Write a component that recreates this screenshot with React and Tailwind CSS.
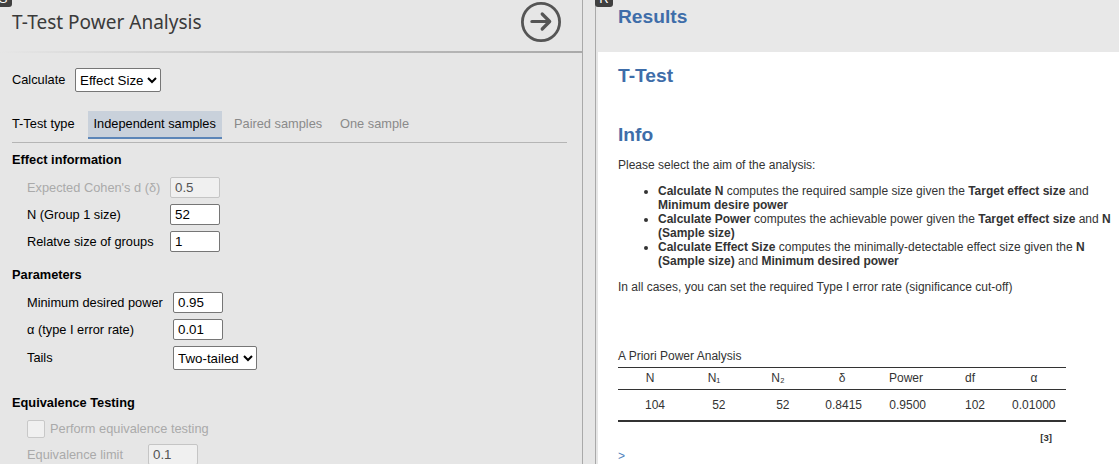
import React from "react";

const columns = [
  { label: "N", value: "104", pad: "pr-[17px]" },
  { label: "N₁", value: "52", pad: "pr-[20.5px]" },
  { label: "N₂", value: "52", pad: "pr-[20.5px]" },
  { label: "δ", value: "0.8415", pad: "pr-3" },
  { label: "Power", value: "0.9500", pad: "pr-3" },
  { label: "df", value: "102", pad: "pr-[17px]" },
  { label: "α", value: "0.01000", pad: "pr-[10.5px]" },
];

function Select({ value, className }) {
  return (
    <select
      className={`h-6 rounded-[2px] border border-[#767676] bg-white text-[13.333px] text-black ${className}`}
      defaultValue={value}
    >
      <option>{value}</option>
    </select>
  );
}

function NumberField({ label, value, labelWidth, disabled }) {
  return (
    <div className="flex h-[27px] items-center">
      <label className={`${labelWidth} whitespace-nowrap ${disabled ? "text-[#aaaaaa]" : ""}`}>{label}</label>
      <input
        disabled={disabled}
        defaultValue={value}
        className={`h-[21px] w-[50px] rounded-[2px] border px-1 text-[13.333px] ${
          disabled ? "border-[#c5c5c5] bg-[#f0f0f0] text-[#545454]" : "border-[#767676] bg-white text-black"
        }`}
      />
    </div>
  );
}

function KeyBadge({ children, className }) {
  return (
    <span
      className={`absolute -top-[11px] h-[18px] w-[18px] rounded-[3px] bg-[#404040] text-center text-[13px] leading-[19px] text-white ${className}`}
    >
      {children}
    </span>
  );
}

function Options() {
  return (
    <section className="relative flex h-full w-[583px] shrink-0 flex-col overflow-hidden border-r border-[#a9a9a9] text-[12.8px] leading-[15px] text-black">
      <KeyBadge className="-left-[6px]">S</KeyBadge>
      <header className="flex h-[51px] shrink-0 items-start justify-between pl-3 pr-[21px]">
        <h1 className="pt-[9px] font-['Noto_Sans',sans-serif] text-[19.05px] leading-[27px] text-[#3a3a3a]">
          T-Test Power Analysis
        </h1>
        <svg className="mt-[2px] h-10 w-10" viewBox="0 0 40 40" fill="none" stroke="#555555">
          <circle cx="20" cy="20" r="18.6" strokeWidth="2.8" />
          <path d="M10.9 19.5H28.5M21.2 12L28.7 19.5L21.2 27" strokeWidth="3.2" strokeLinecap="round" strokeLinejoin="round" />
        </svg>
      </header>
      <div className="h-[2px] shrink-0 bg-linear-to-r from-[#e6e6e6] via-[#c2c2c2] to-[#a9a9a9]" />
      <div className="flex h-[54px] shrink-0 items-center pl-3">
        <span className="w-[63px] pb-px">Calculate</span>
        <Select value="Effect Size" className="w-[86px]" />
      </div>
      <div className="ml-3 mr-[15px] flex h-9 shrink-0 items-start border-b border-[#b5b5b5] pt-1">
        <span className="w-[76px] pt-[5px]">T-Test type</span>
        <span className="h-7 w-[134px] whitespace-nowrap border-b-2 border-[#5b85b8] bg-[#c9d1db] pl-[5.5px] pt-[5px]">
          Independent samples
        </span>
        <span className="w-[118px] pl-3 pt-[5px] text-[#8a8a8a]">Paired samples</span>
        <span className="pt-[5px] text-[#8a8a8a]">One sample</span>
      </div>
      <h2 className="ml-3 mt-[9px] font-bold">Effect information</h2>
      <div className="ml-[27px] mt-[7px]">
        <NumberField label="Expected Cohen's d (δ)" value="0.5" labelWidth="w-[143px]" disabled />
        <NumberField label="N (Group 1 size)" value="52" labelWidth="w-[143px]" />
        <NumberField label="Relatve size of groups" value="1" labelWidth="w-[143px]" />
      </div>
      <h2 className="ml-3 mt-3 font-bold">Parameters</h2>
      <div className="ml-[27px] mt-[7px]">
        <NumberField label="Minimum desired power" value="0.95" labelWidth="w-[146px]" />
        <NumberField label="α (type I error rate)" value="0.01" labelWidth="w-[146px]" />
        <div className="flex h-[30px] items-center">
          <span className="w-[146px] pb-px">Tails</span>
          <Select value="Two-tailed" className="w-[84px]" />
        </div>
      </div>
      <h2 className="ml-3 mt-[22px] font-bold">Equivalence Testing</h2>
      <div className="ml-[27px] mt-[10px] flex h-[18px] shrink-0 items-center text-[#aaaaaa]">
        <span className="mr-[5px] h-[18px] w-[18px] rounded-[2px] border border-[#c8c8c8] bg-[#f0f0f0]" />
        <span className="pb-px">Perform equivalence testing</span>
      </div>
      <div className="ml-[27px] mt-[3px]">
        <NumberField label="Equivalence limit" value="0.1" labelWidth="w-[121px]" disabled />
      </div>
    </section>
  );
}

function Results() {
  return (
    <section className="relative h-full min-w-0 flex-1 border-l border-[#a9a9a9] pl-[2px] text-xs leading-[14px] text-[#333333]">
      <KeyBadge className="-left-px">R</KeyBadge>
      <div className="flex h-full flex-col overflow-hidden bg-white">
        <header className="h-[52px] shrink-0 bg-[#e8e8e8] pl-5 pt-[6px]">
          <h1 className="text-[19.2px] font-bold leading-[22px] text-[#3e6da9]">Results</h1>
        </header>
        <div className="pl-5">
          <h2 className="mt-[13px] text-[19.2px] font-bold leading-[22px] text-[#3e6da9]">T-Test</h2>
          <h2 className="mt-[37px] text-[19.2px] font-bold leading-[22px] text-[#3e6da9]">Info</h2>
          <p className="mt-3">Please select the aim of the analysis:</p>
          <ul className="mt-3 list-disc pl-10">
            <li>
              <b>Calculate N</b> computes the required sample size given the <b>Target effect size</b> and
              <br />
              <b>Minimum desire power</b>
            </li>
            <li>
              <b>Calculate Power</b> computes the achievable power given the <b>Target effect size</b> and <b>N</b>
              <br />
              <b>(Sample size)</b>
            </li>
            <li>
              <b>Calculate Effect Size</b> computes the minimally-detectable effect size given the <b>N</b>
              <br />
              <b>(Sample size)</b> and <b>Minimum desired power</b>
            </li>
          </ul>
          <p className="mt-3">In all cases, you can set the required Type I error rate (significance cut-off)</p>
          <div className="mt-[55px] w-[448px]">
            <p>A Priori Power Analysis</p>
            <div className="mt-1 grid h-[23px] grid-cols-7 border-y border-[#333333] pt-[3px] text-center">
              {columns.map((c) => (
                <span key={c.label} className="h-[14px]">
                  {c.label}
                </span>
              ))}
            </div>
            <div className="grid h-8 grid-cols-7 border-b-2 border-[#333333] pt-2 text-right">
              {columns.map((c) => (
                <span key={c.label} className={c.pad}>
                  {c.value}
                </span>
              ))}
            </div>
            <p className="mt-[9px] pr-[14px] text-right text-[9.6px] font-bold">[3]</p>
          </div>
          <p className="mt-1 text-[#4f81bd]">&gt;</p>
        </div>
      </div>
    </section>
  );
}

export default function App() {
  return (
    <main className="flex h-[464px] w-[1119px] overflow-hidden bg-[#e6e6e6] font-['Liberation_Sans',Arial,sans-serif]">
      <Options />
      <div className="w-3 shrink-0" />
      <Results />
    </main>
  );
}
